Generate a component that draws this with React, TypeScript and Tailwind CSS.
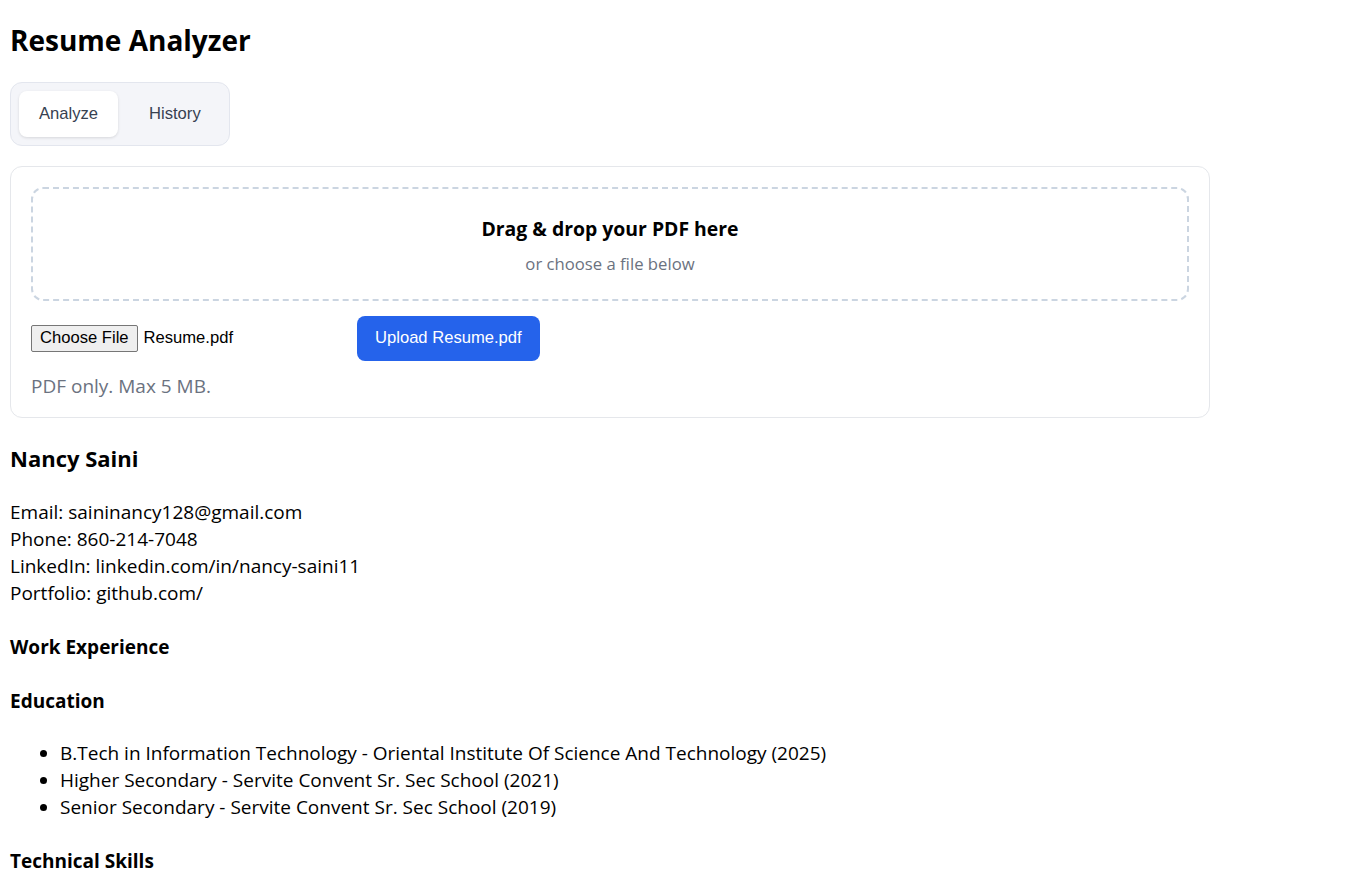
import { useState } from "react";

const sans = "font-['Open_Sans',sans-serif]";
const arial = "font-['Liberation_Sans',Arial,sans-serif]";

const education = [
  "B.Tech in Information Technology - Oriental Institute Of Science And Technology (2025)",
  "Higher Secondary - Servite Convent Sr. Sec School (2021)",
  "Senior Secondary - Servite Convent Sr. Sec School (2019)",
];

const Tabs = ({ tab, setTab }: { tab: string; setTab: (t: string) => void }) => (
  <div className="inline-flex gap-[11px] p-2 rounded-xl border border-[#e3e6ee] bg-[#f4f5f9]">
    {["Analyze", "History"].map((t) => (
      <button
        key={t}
        onClick={() => setTab(t)}
        className={`${arial} h-[46px] px-5 text-[16.6px] rounded-lg text-[#374151] ${
          tab === t ? "bg-white shadow-[0_1px_3px_rgba(0,0,0,0.12)]" : ""
        }`}
      >
        {t}
      </button>
    ))}
  </div>
);

const UploadCard = () => (
  <div className="mt-5 w-[1200px] rounded-xl border border-[#e5e7eb] bg-white px-5 pt-5 pb-[19px]">
    <div className="rounded-xl border-2 border-dashed border-[#cbd5e1] pt-[26px] pb-[23px] text-center">
      <p className="text-[19.4px] font-bold leading-[27px] text-black">Drag &amp; drop your PDF here</p>
      <p className="mt-[10px] text-[16.7px] leading-6 text-[#6b7280]">or choose a file below</p>
    </div>
    <div className="mt-[15px] flex items-center">
      <div className={`${arial} flex w-[326px] items-center text-[16.6px] text-black`}>
        <span className="flex h-[27px] items-center rounded-[2px] border border-[#767676] bg-[#efefef] px-[8px]">
          Choose File
        </span>
        <span className="ml-[6px]">Resume.pdf</span>
      </div>
      <button className={`${arial} h-[45px] rounded-lg bg-[#2563eb] px-[18px] text-[16.6px] text-white`}>
        Upload Resume.pdf
      </button>
    </div>
    <p className="mt-[13px] text-[19px] leading-6 text-[#6b7280]">PDF only. Max 5 MB.</p>
  </div>
);

const ResumeView = () => (
  <div className="mt-[27px] text-[19px] leading-[27px] text-black">
    <h3 className="text-[22px] font-bold leading-[27px]">Nancy Saini</h3>
    <div className="mt-[27px]">
      <div>Email: saininancy128@gmail.com</div>
      <div>Phone: 860-214-7048</div>
      <div>LinkedIn: linkedin.com/in/nancy-saini11</div>
      <div>Portfolio: github.com/</div>
    </div>
    <h4 className="mt-[27px] font-bold">Work Experience</h4>
    <h4 className="mt-[27px] font-bold">Education</h4>
    <ul className="mt-[25px] list-disc pl-[50px]">
      {education.map((e) => (
        <li key={e}>{e}</li>
      ))}
    </ul>
    <h4 className="mt-[27px] font-bold">Technical Skills</h4>
  </div>
);

export default function App() {
  const [tab, setTab] = useState("Analyze");
  return (
    <div className={`${sans} min-h-screen bg-white px-[10px] text-black`}>
      <h1 className="pt-[21px] text-[28px] font-bold leading-[38px]">Resume Analyzer</h1>
      <div className="mt-[23px]">
        <Tabs tab={tab} setTab={setTab} />
      </div>
      <UploadCard />
      <ResumeView />
    </div>
  );
}
